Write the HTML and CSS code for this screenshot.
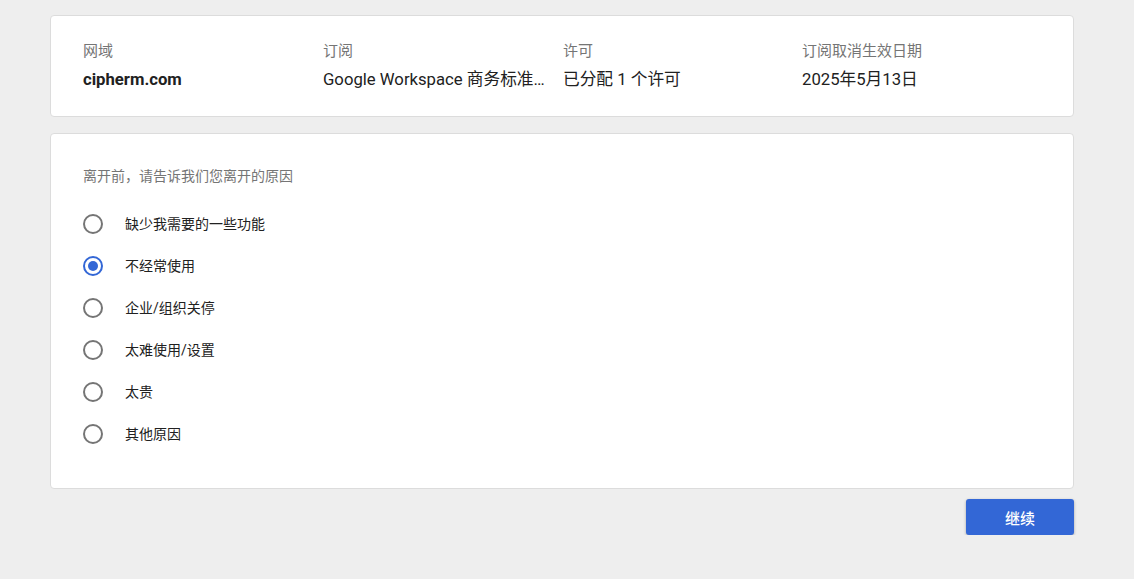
FILE: index.html
```html
<!DOCTYPE html>
<html lang="zh-CN">
<head>
<meta charset="utf-8">
<link rel="stylesheet" href="styles.css">
</head>
<body>
<div class="page">
  <section class="card summary">
    <div class="field">
      <div class="label">网域</div>
      <div class="value bold">cipherm.com</div>
    </div>
    <div class="field">
      <div class="label">订阅</div>
      <div class="value ellipsis">Google Workspace 商务标准版</div>
    </div>
    <div class="field">
      <div class="label">许可</div>
      <div class="value">已分配 1 个许可</div>
    </div>
    <div class="field">
      <div class="label">订阅取消生效日期</div>
      <div class="value">2025年5月13日</div>
    </div>
  </section>

  <section class="card reasons">
    <div class="title">离开前，请告诉我们您离开的原因</div>
    <ul class="options">
      <li class="option"><span class="radio"></span><span class="text">缺少我需要的一些功能</span></li>
      <li class="option"><span class="radio checked"></span><span class="text">不经常使用</span></li>
      <li class="option"><span class="radio"></span><span class="text">企业/组织关停</span></li>
      <li class="option"><span class="radio"></span><span class="text">太难使用/设置</span></li>
      <li class="option"><span class="radio"></span><span class="text">太贵</span></li>
      <li class="option"><span class="radio"></span><span class="text">其他原因</span></li>
    </ul>
  </section>

  <div class="actions">
    <button class="primary">继续</button>
  </div>
</div>
</body>
</html>
```

FILE: styles.css
```css
html, body {
  margin: 0;
  padding: 0;
  background: #eeeeee;
  font-family: Roboto, "Noto Sans CJK SC", "Noto Sans", sans-serif;
  color: #202124;
}

.page {
  width: 1024px;
  margin-left: 50px;
  padding-top: 15px;
  display: flex;
  flex-direction: column;
}

.card {
  background: #ffffff;
  border: 1px solid #dcdcdc;
  border-radius: 4px;
  box-sizing: border-box;
}

.summary {
  height: 102px;
  padding: 25px 32px 0;
  display: grid;
  grid-template-columns: 240px 240px 239px 1fr;
}

.field {
  min-width: 0;
  padding-right: 14px;
}

.label {
  font-size: 15px;
  line-height: 20px;
  color: #757575;
}

.value {
  margin-top: 7px;
  font-size: 16.7px;
  line-height: 24px;
  color: #212121;
  white-space: nowrap;
}

.bold {
  font-weight: 700;
}

.ellipsis {
  overflow: hidden;
  text-overflow: ellipsis;
}

.reasons {
  margin-top: 16px;
  height: 356px;
  padding: 32px 32px 0;
}

.title {
  font-size: 14px;
  line-height: 20px;
  color: #757575;
}

.options {
  list-style: none;
  margin: 17px 0 0;
  padding: 0;
}

.option {
  height: 42px;
  display: flex;
  align-items: center;
}

.radio {
  width: 20px;
  height: 20px;
  box-sizing: border-box;
  border: 2px solid #757575;
  border-radius: 50%;
  flex: none;
  display: flex;
  align-items: center;
  justify-content: center;
}

.radio.checked {
  border-color: #3367d6;
}

.radio.checked::after {
  content: "";
  width: 10px;
  height: 10px;
  border-radius: 50%;
  background: #3367d6;
}

.text {
  margin-left: 22px;
  font-size: 14px;
  line-height: 20px;
  color: #212121;
}

.actions {
  display: flex;
  justify-content: flex-end;
  margin-top: 10px;
}

.primary {
  width: 108px;
  height: 36px;
  border: none;
  border-radius: 3px;
  background: #3367d6;
  color: #ffffff;
  font-family: Roboto, "Noto Sans CJK SC", sans-serif;
  font-size: 15px;
  font-weight: 500;
  box-shadow: 0 1px 3px rgba(0, 0, 0, 0.3);
  cursor: pointer;
}
```
